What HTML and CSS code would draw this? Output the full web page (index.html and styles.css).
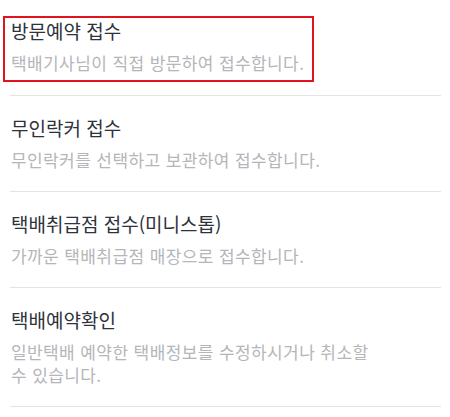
FILE: index.html
```html
<!DOCTYPE html>
<html lang="ko">
<head>
    <meta charset="UTF-8">
    <meta name="viewport" content="width=device-width, initial-scale=1.0">
    <title>택배 접수</title>
    <link rel="stylesheet" href="styles.css">
</head>
<body>

    <ul class="menu-list">
        <li class="menu-item">
            <div class="item-text highlight">
                <div class="item-title">방문예약 접수</div>
                <div class="item-desc">택배기사님이 직접 방문하여 접수합니다.</div>
            </div>
        </li>
        <li class="menu-item">
            <div class="item-text">
                <div class="item-title">무인락커 접수</div>
                <div class="item-desc">무인락커를 선택하고 보관하여 접수합니다.</div>
            </div>
        </li>
        <li class="menu-item">
            <div class="item-text">
                <div class="item-title">택배취급점 접수(미니스톱)</div>
                <div class="item-desc">가까운 택배취급점 매장으로 접수합니다.</div>
            </div>
        </li>
        <li class="menu-item">
            <div class="item-text">
                <div class="item-title">택배예약확인</div>
                <div class="item-desc">일반택배 예약한 택배정보를 수정하시거나 취소할 수 있습니다.</div>
            </div>
        </li>
    </ul>

</body>
</html>
```

FILE: styles.css
```css
body {
    font-family: "Noto Sans CJK KR", "Noto Sans", sans-serif;
    margin: 0;
    background-color: #fff;
}

.menu-list {
    list-style: none;
    margin: 0 9px 0 10px;
    padding: 0;
}

.menu-item {
    padding: 19px 69px 20px 1px;
    border-bottom: 1px solid #e3e3e3;
}

.item-title {
    font-size: 19px;
    line-height: 26px;
    color: #2e323a;
}

.item-desc {
    font-size: 17px;
    line-height: 23px;
    letter-spacing: 0.4px;
    color: #b4b6ba;
    margin-top: 7px;
}

.highlight {
    display: inline-block;
    border: 2px solid #e0141e;
    padding: 0 8px 6px 6px;
    margin: -3px -10px -8px -8px;
}
```
